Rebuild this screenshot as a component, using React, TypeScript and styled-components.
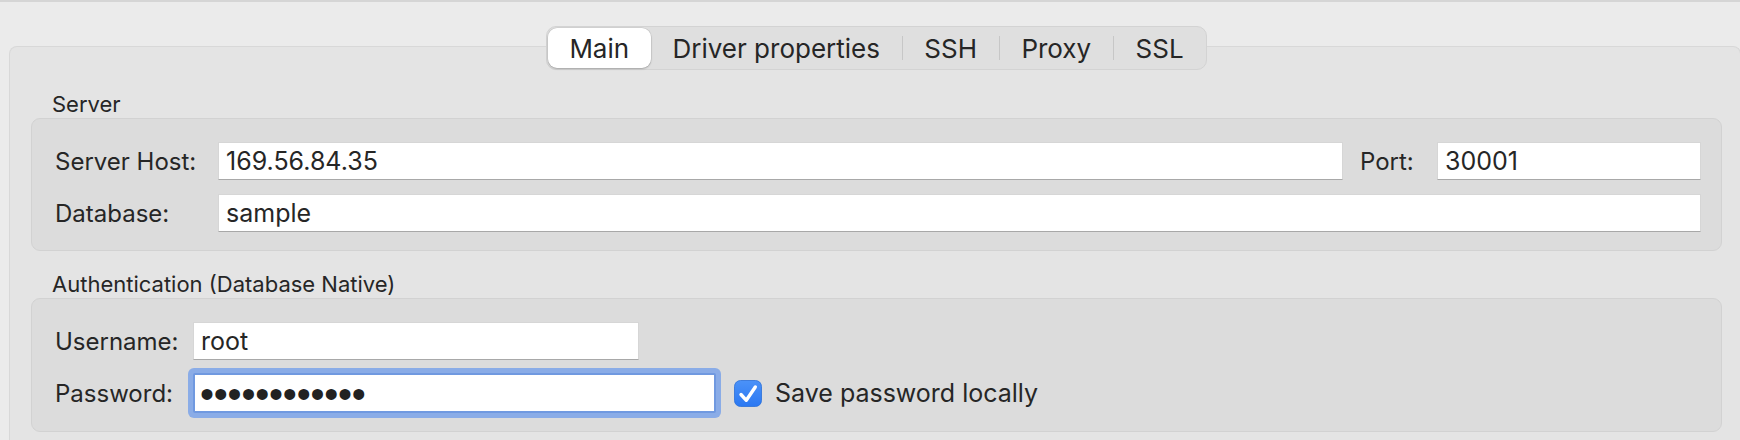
import styled, { createGlobalStyle } from "styled-components";

const GlobalStyle = createGlobalStyle`
  html, body {
    margin: 0;
    padding: 0;
  }
  body {
    background: #ebebeb;
    font-family: Inter, "Liberation Sans", sans-serif;
    color: #262626;
    overflow: hidden;
  }
`;

const Window = styled.div`
  height: 440px;
  box-sizing: border-box;
  border-top: 2px solid #d5d5d5;
  padding: 24px 0 0 9px;
  display: flex;
  flex-direction: column;
`;

const TabStrip = styled.div`
  display: flex;
  justify-content: center;
  padding-left: 4px;
  margin-bottom: -24px;
  position: relative;
  z-index: 1;
`;

const Segmented = styled.div`
  display: flex;
  align-items: center;
  height: 44px;
  box-sizing: border-box;
  padding: 1px;
  background: #dfdfdf;
  border: 1px solid #d3d3d3;
  border-radius: 10px;
`;

const Segment = styled.div<{ $active?: boolean }>`
  height: 40px;
  display: flex;
  align-items: center;
  padding: 0 21.7px;
  font-size: 26px;
  border-radius: 9px;
  background: ${(p) => (p.$active ? "#ffffff" : "transparent")};
  box-shadow: ${(p) =>
    p.$active ? "0 1px 2px rgba(0,0,0,0.22), 0 0 0 0.5px rgba(0,0,0,0.1)" : "none"};
`;

const Divider = styled.span`
  width: 1px;
  height: 24px;
  background: #c7c7c7;
`;

const Panel = styled.div`
  flex: 1;
  margin-right: -1px;
  background: #e4e4e4;
  border: 1px solid #d8d8d8;
  border-bottom: none;
  border-radius: 8px 8px 0 0;
  padding: 44px 18px 0 21px;
`;

const SectionTitle = styled.div`
  height: 27px;
  line-height: 26px;
  font-size: 22px;
  padding-left: 21px;
`;

const Group = styled.div`
  background: #dcdcdc;
  border: 1px solid #d2d2d2;
  border-radius: 9px;
  padding: 23px 20px 18px 23px;
  margin-bottom: 20px;
`;

const ServerGrid = styled.div`
  display: grid;
  grid-template-columns: 163px 1fr 94px 264px;
  row-gap: 14px;
  align-items: center;
`;

const AuthGrid = styled.div`
  display: grid;
  grid-template-columns: 138px auto;
  row-gap: 13px;
  align-items: center;
  justify-content: start;
`;

const Label = styled.div<{ $indent?: number }>`
  font-size: 24px;
  padding-left: ${(p) => p.$indent ?? 0}px;
  white-space: nowrap;
`;

const Field = styled.div<{ $width?: number; $span?: number }>`
  height: 38px;
  box-sizing: border-box;
  background: #ffffff;
  border: 1px solid #d6d6d6;
  border-bottom-color: #a8a8a8;
  padding: 0 7px;
  display: flex;
  align-items: center;
  font-size: 25px;
  width: ${(p) => (p.$width ? `${p.$width}px` : "auto")};
  grid-column: ${(p) => (p.$span ? `span ${p.$span}` : "auto")};
`;

const FocusField = styled(Field)`
  height: 40px;
  border: 2px solid #7099e0;
  border-radius: 2px;
  box-shadow: 0 0 0 5px #8aace7;
  padding: 0 5px;
`;

const Dots = styled.span`
  font-family: "Liberation Sans", sans-serif;
  font-size: 40px;
  line-height: 1;
  letter-spacing: -0.2px;
  color: #222;
  margin-top: 2px;
`;

const PasswordRow = styled.div`
  display: flex;
  align-items: center;
  gap: 18px;
`;

const CheckRow = styled.label`
  display: flex;
  align-items: center;
  gap: 13px;
  font-size: 25px;
`;

const CheckBox = () => (
  <svg width="28" height="27" viewBox="0 0 28 27">
    <defs>
      <linearGradient id="cb" x1="0" y1="0" x2="0" y2="1">
        <stop offset="0" stopColor="#4b92f8" />
        <stop offset="1" stopColor="#2b78f2" />
      </linearGradient>
    </defs>
    <rect x="0.5" y="0.5" width="27" height="26" rx="6" fill="url(#cb)" stroke="#2a6fd8" strokeWidth="0.8" />
    <path d="M7 14.5 L12.3 20.3 L21.3 7" fill="none" stroke="#fff" strokeWidth="3.4" strokeLinecap="round" strokeLinejoin="round" />
  </svg>
);

const tabs = ["Main", "Driver properties", "SSH", "Proxy", "SSL"];

function App() {
  const active = 0;
  return (
    <>
      <GlobalStyle />
      <Window>
        <TabStrip>
          <Segmented>
            {tabs.map((t, i) => [
              i > 0 && i - 1 !== active && i !== active ? <Divider key={`d${i}`} /> : null,
              <Segment key={t} $active={i === active}>
                {t}
              </Segment>,
            ])}
          </Segmented>
        </TabStrip>
        <Panel>
          <SectionTitle>Server</SectionTitle>
          <Group>
            <ServerGrid>
              <Label>Server Host:</Label>
              <Field>169.56.84.35</Field>
              <Label $indent={17}>Port:</Label>
              <Field>30001</Field>
              <Label>Database:</Label>
              <Field $span={3}>sample</Field>
            </ServerGrid>
          </Group>
          <SectionTitle>Authentication (Database Native)</SectionTitle>
          <Group>
            <AuthGrid>
              <Label>Username:</Label>
              <Field $width={446}>root</Field>
              <Label>Password:</Label>
              <PasswordRow>
                <FocusField $width={523}>
                  <Dots>{"••••••••••••"}</Dots>
                </FocusField>
                <CheckRow>
                  <CheckBox />
                  Save password locally
                </CheckRow>
              </PasswordRow>
            </AuthGrid>
          </Group>
        </Panel>
      </Window>
    </>
  );
}

export default App;
